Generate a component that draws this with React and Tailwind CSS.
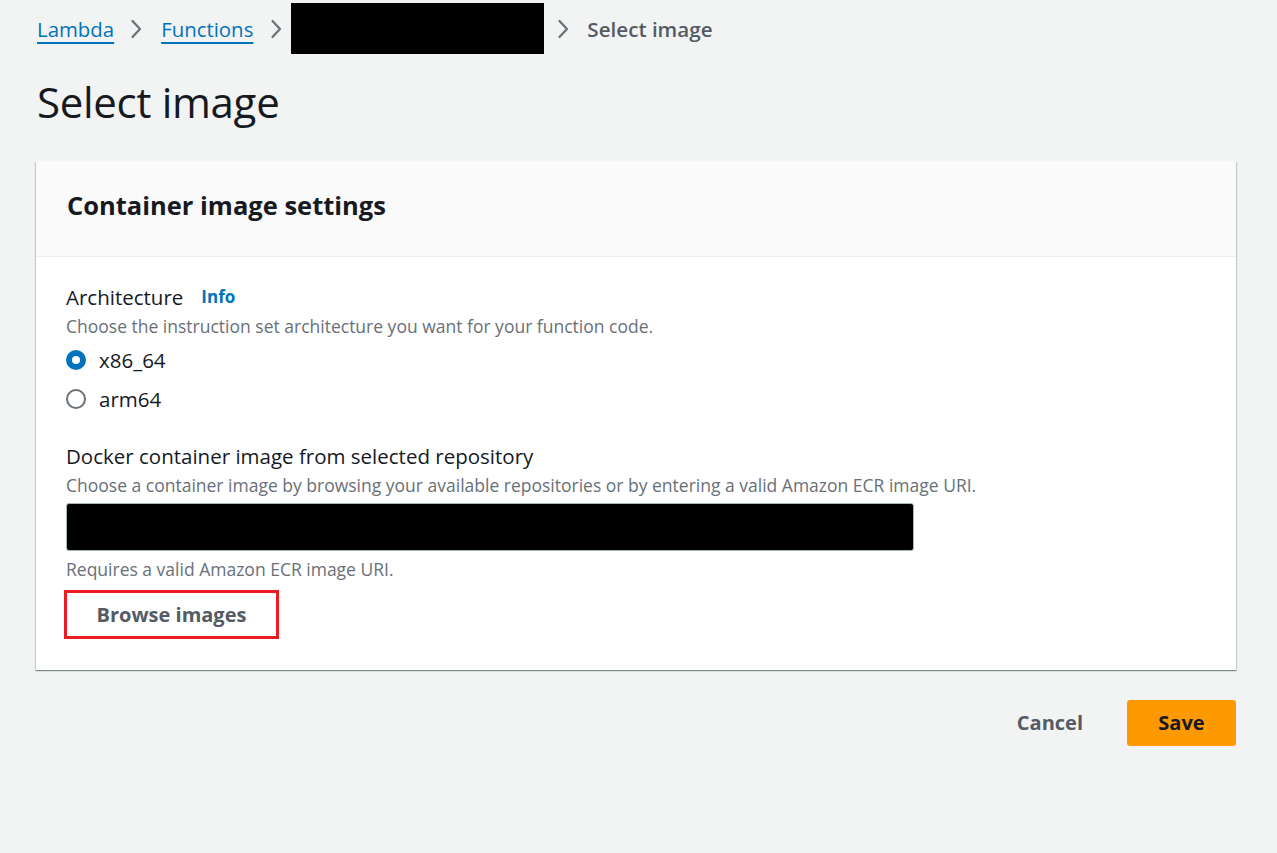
import React from "react";

function Chevron({ className }) {
  return (
    <svg width="12" height="22" viewBox="0 0 12 22" className={"shrink-0 " + className}>
      <path d="M2.5 3 L10 11 L2.5 19" fill="none" stroke="#687078" strokeWidth="2.2" strokeLinecap="round" strokeLinejoin="round" />
    </svg>
  );
}

export default function App() {
  return (
    <div
      className="min-h-[853px] w-full bg-[#f2f3f3] text-[#16191f]"
      style={{ fontFamily: '"Open Sans", "Liberation Sans", sans-serif' }}
    >
      <div className="pl-[37px] pr-[41px]">
        {/* Breadcrumb */}
        <div className="flex h-[58px] items-center">
          <a className="text-[20.4px] text-[#0073bb] underline decoration-[2px] underline-offset-[5px]">Lambda</a>
          <Chevron className="ml-[16px] mr-[19px]" />
          <a className="text-[20.4px] text-[#0073bb] underline decoration-[2px] underline-offset-[5px]">Functions</a>
          <Chevron className="ml-[17px] mr-[9px]" />
          <div className="mt-[-2px] h-[51px] w-[253px] bg-black" />
          <Chevron className="ml-[13px] mr-[18px]" />
          <span className="text-[20.6px] font-semibold text-[#545b64]">Select image</span>
        </div>

        {/* Title */}
        <h1 className="mt-[20px] text-[42px] leading-[48px] font-normal tracking-[-0.3px]">Select image</h1>

        {/* Card */}
        <div className="mt-[35px] -ml-[1px] bg-white shadow-[0_1px_1px_0_rgba(0,28,36,0.3),1px_1px_1px_0_rgba(0,28,36,0.15),-1px_1px_1px_0_rgba(0,28,36,0.15)]">
          <div className="flex h-[96px] items-center border-b border-[#eaeded] bg-[#fafafa] px-[31px] pb-[6px]">
            <h2 className="text-[25.5px] font-bold">Container image settings</h2>
          </div>
          <div className="px-[30px] pt-[26px] pb-[31px]">
            <div className="flex h-[28px] items-center">
              <span className="text-[20.5px] leading-[28px]">Architecture</span>
              <span className="ml-[18px] text-[17px] font-bold text-[#0073bb]">Info</span>
            </div>
            <div className="mt-[3px] h-[24px] text-[17.5px] leading-[24px] text-[#687078]">
              Choose the instruction set architecture you want for your function code.
            </div>
            <div className="mt-[8px] flex h-[28px] items-center">
              <span className="flex h-[20px] w-[20px] items-center justify-center rounded-full bg-[#0073bb]">
                <span className="h-[8px] w-[8px] rounded-full bg-white" />
              </span>
              <span className="ml-[13px] text-[20.5px] leading-[28px]">x86_64</span>
            </div>
            <div className="mt-[11px] flex h-[28px] items-center">
              <span className="h-[20px] w-[20px] rounded-full border-2 border-[#687078] bg-white" />
              <span className="ml-[13px] text-[20.5px] leading-[28px]">arm64</span>
            </div>

            <div className="mt-[29px] h-[28px] text-[20.5px] leading-[28px]">Docker container image from selected repository</div>
            <div className="mt-[3px] h-[24px] text-[17.5px] leading-[24px] text-[#687078]">
              Choose a container image by browsing your available repositories or by entering a valid Amazon ECR image URI.
            </div>
            <div className="mt-[6px] h-[48px] w-[848px] rounded-[3px] border border-[#aab7b8] bg-black" />
            <div className="mt-[6px] h-[24px] text-[17.5px] leading-[24px] text-[#687078]">Requires a valid Amazon ECR image URI.</div>
            <div className="mt-[9px] -ml-[2px] flex h-[49px] w-[215px] items-center justify-center border-[3px] border-[#ed1c24]">
              <span className="text-[20px] font-bold text-[#545b64]">Browse images</span>
            </div>
          </div>
        </div>

        {/* Actions */}
        <div className="mt-[30px] flex items-center justify-end">
          <span className="text-[20px] font-bold text-[#545b64]">Cancel</span>
          <button className="ml-[44px] h-[46px] w-[109px] rounded-[3px] bg-[#ff9900] text-[20px] font-bold text-[#16191f]">Save</button>
        </div>
      </div>
    </div>
  );
}
